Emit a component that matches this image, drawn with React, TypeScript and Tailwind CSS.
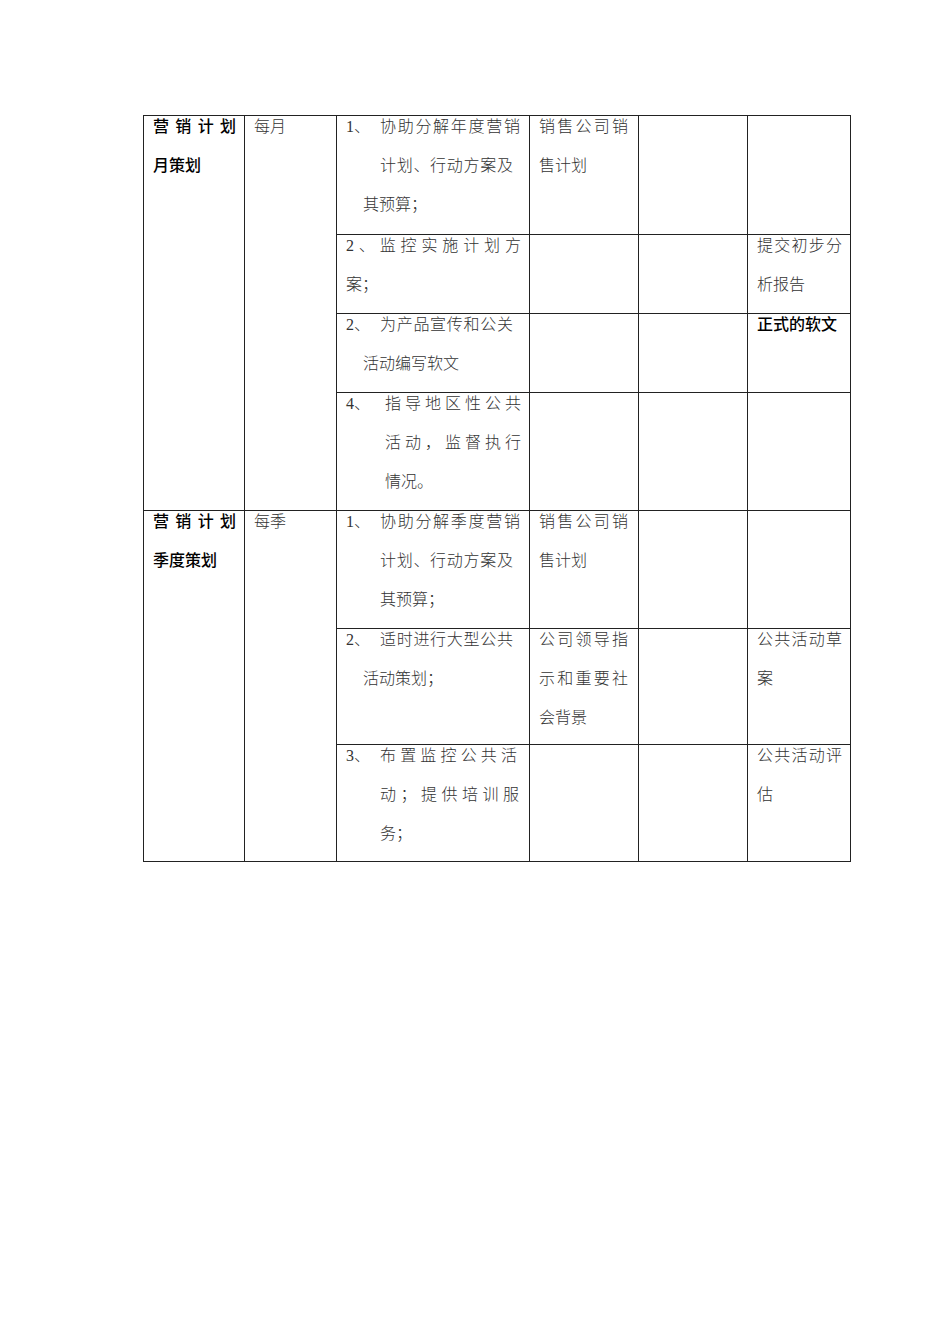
import React from "react";

const FONT = "font-['Liberation_Serif','Noto_Sans_CJK_SC',serif]";

function J({ w, text, ml = "", bold = false }: { w: string; text: string; ml?: string; bold?: boolean }) {
  return (
    <div className={"flex justify-between " + w + " " + ml + (bold ? " font-medium text-black" : "")}>
      {Array.from(text).map((c, i) => (
        <span key={i}>{c}</span>
      ))}
    </div>
  );
}

function Line({ children, className = "" }: { children: React.ReactNode; className?: string }) {
  return <div className={"flex h-[39px] leading-[16px] whitespace-nowrap " + className}>{children}</div>;
}

function Cell({ children, className = "" }: { children?: React.ReactNode; className?: string }) {
  return <div className={"border-r border-b border-[#222] pl-[9px] pt-[3px] " + className}>{children}</div>;
}

function Num({ n }: { n: string }) {
  return <span className="w-[34px]">{n}</span>;
}

export default function App() {
  return (
    <div className="min-h-[1344px] w-[950px] bg-white pt-[115px] pl-[143px]">
      <div
        className={
          "grid w-[708px] grid-cols-[101px_92px_193px_109px_109px_103px] grid-rows-[119px_79px_79px_118px_118px_116px_117px] border-l border-t border-[#222] text-[16px] font-light text-[#333] " +
          FONT
        }
      >
        {/* Group 1 */}
        <Cell className="row-span-4">
          <Line>
            <J w="w-[83px]" text="营销计划" bold />
          </Line>
          <Line className="font-medium text-black">月策划</Line>
        </Cell>
        <Cell className="row-span-4">
          <Line>每月</Line>
        </Cell>

        {/* Row a */}
        <Cell>
          <Line>
            <Num n="1、" />
            <J w="w-[140px]" text="协助分解年度营销" />
          </Line>
          <Line>
            <J w="w-[133px]" ml="ml-[34px]" text="计划、行动方案及" />
          </Line>
          <Line className="pl-[17px]">其预算；</Line>
        </Cell>
        <Cell>
          <Line>
            <J w="w-[89px]" text="销售公司销" />
          </Line>
          <Line>售计划</Line>
        </Cell>
        <Cell />
        <Cell />

        {/* Row b */}
        <Cell>
          <Line>
            <J w="w-[175px]" text="2、监控实施计划方" />
          </Line>
          <Line>案；</Line>
        </Cell>
        <Cell />
        <Cell />
        <Cell>
          <Line>
            <J w="w-[85px]" text="提交初步分" />
          </Line>
          <Line>析报告</Line>
        </Cell>

        {/* Row c */}
        <Cell>
          <Line>
            <Num n="2、" />
            <J w="w-[133px]" text="为产品宣传和公关" />
          </Line>
          <Line className="pl-[17px]">活动编写软文</Line>
        </Cell>
        <Cell />
        <Cell />
        <Cell>
          <Line className="font-medium text-black">正式的软文</Line>
        </Cell>

        {/* Row d */}
        <Cell>
          <Line>
            <span className="w-[39px]">4、</span>
            <J w="w-[136px]" text="指导地区性公共" />
          </Line>
          <Line>
            <J w="w-[136px]" ml="ml-[39px]" text="活动，监督执行" />
          </Line>
          <Line className="pl-[39px]">情况。</Line>
        </Cell>
        <Cell />
        <Cell />
        <Cell />

        {/* Group 2 */}
        <Cell className="row-span-3">
          <Line>
            <J w="w-[83px]" text="营销计划" bold />
          </Line>
          <Line className="font-medium text-black">季度策划</Line>
        </Cell>
        <Cell className="row-span-3">
          <Line>每季</Line>
        </Cell>

        {/* Row e */}
        <Cell>
          <Line>
            <Num n="1、" />
            <J w="w-[140px]" text="协助分解季度营销" />
          </Line>
          <Line>
            <J w="w-[133px]" ml="ml-[34px]" text="计划、行动方案及" />
          </Line>
          <Line className="pl-[34px]">其预算；</Line>
        </Cell>
        <Cell>
          <Line>
            <J w="w-[89px]" text="销售公司销" />
          </Line>
          <Line>售计划</Line>
        </Cell>
        <Cell />
        <Cell />

        {/* Row f */}
        <Cell>
          <Line>
            <Num n="2、" />
            <J w="w-[133px]" text="适时进行大型公共" />
          </Line>
          <Line className="pl-[17px]">活动策划；</Line>
        </Cell>
        <Cell>
          <Line>
            <J w="w-[89px]" text="公司领导指" />
          </Line>
          <Line>
            <J w="w-[89px]" text="示和重要社" />
          </Line>
          <Line>会背景</Line>
        </Cell>
        <Cell />
        <Cell>
          <Line>
            <J w="w-[85px]" text="公共活动草" />
          </Line>
          <Line>案</Line>
        </Cell>

        {/* Row g */}
        <Cell>
          <Line>
            <Num n="3、" />
            <J w="w-[137px]" text="布置监控公共活" />
          </Line>
          <Line>
            <J w="w-[139px]" ml="ml-[34px]" text="动；提供培训服" />
          </Line>
          <Line className="pl-[34px]">务；</Line>
        </Cell>
        <Cell />
        <Cell />
        <Cell>
          <Line>
            <J w="w-[85px]" text="公共活动评" />
          </Line>
          <Line>估</Line>
        </Cell>
      </div>
    </div>
  );
}
